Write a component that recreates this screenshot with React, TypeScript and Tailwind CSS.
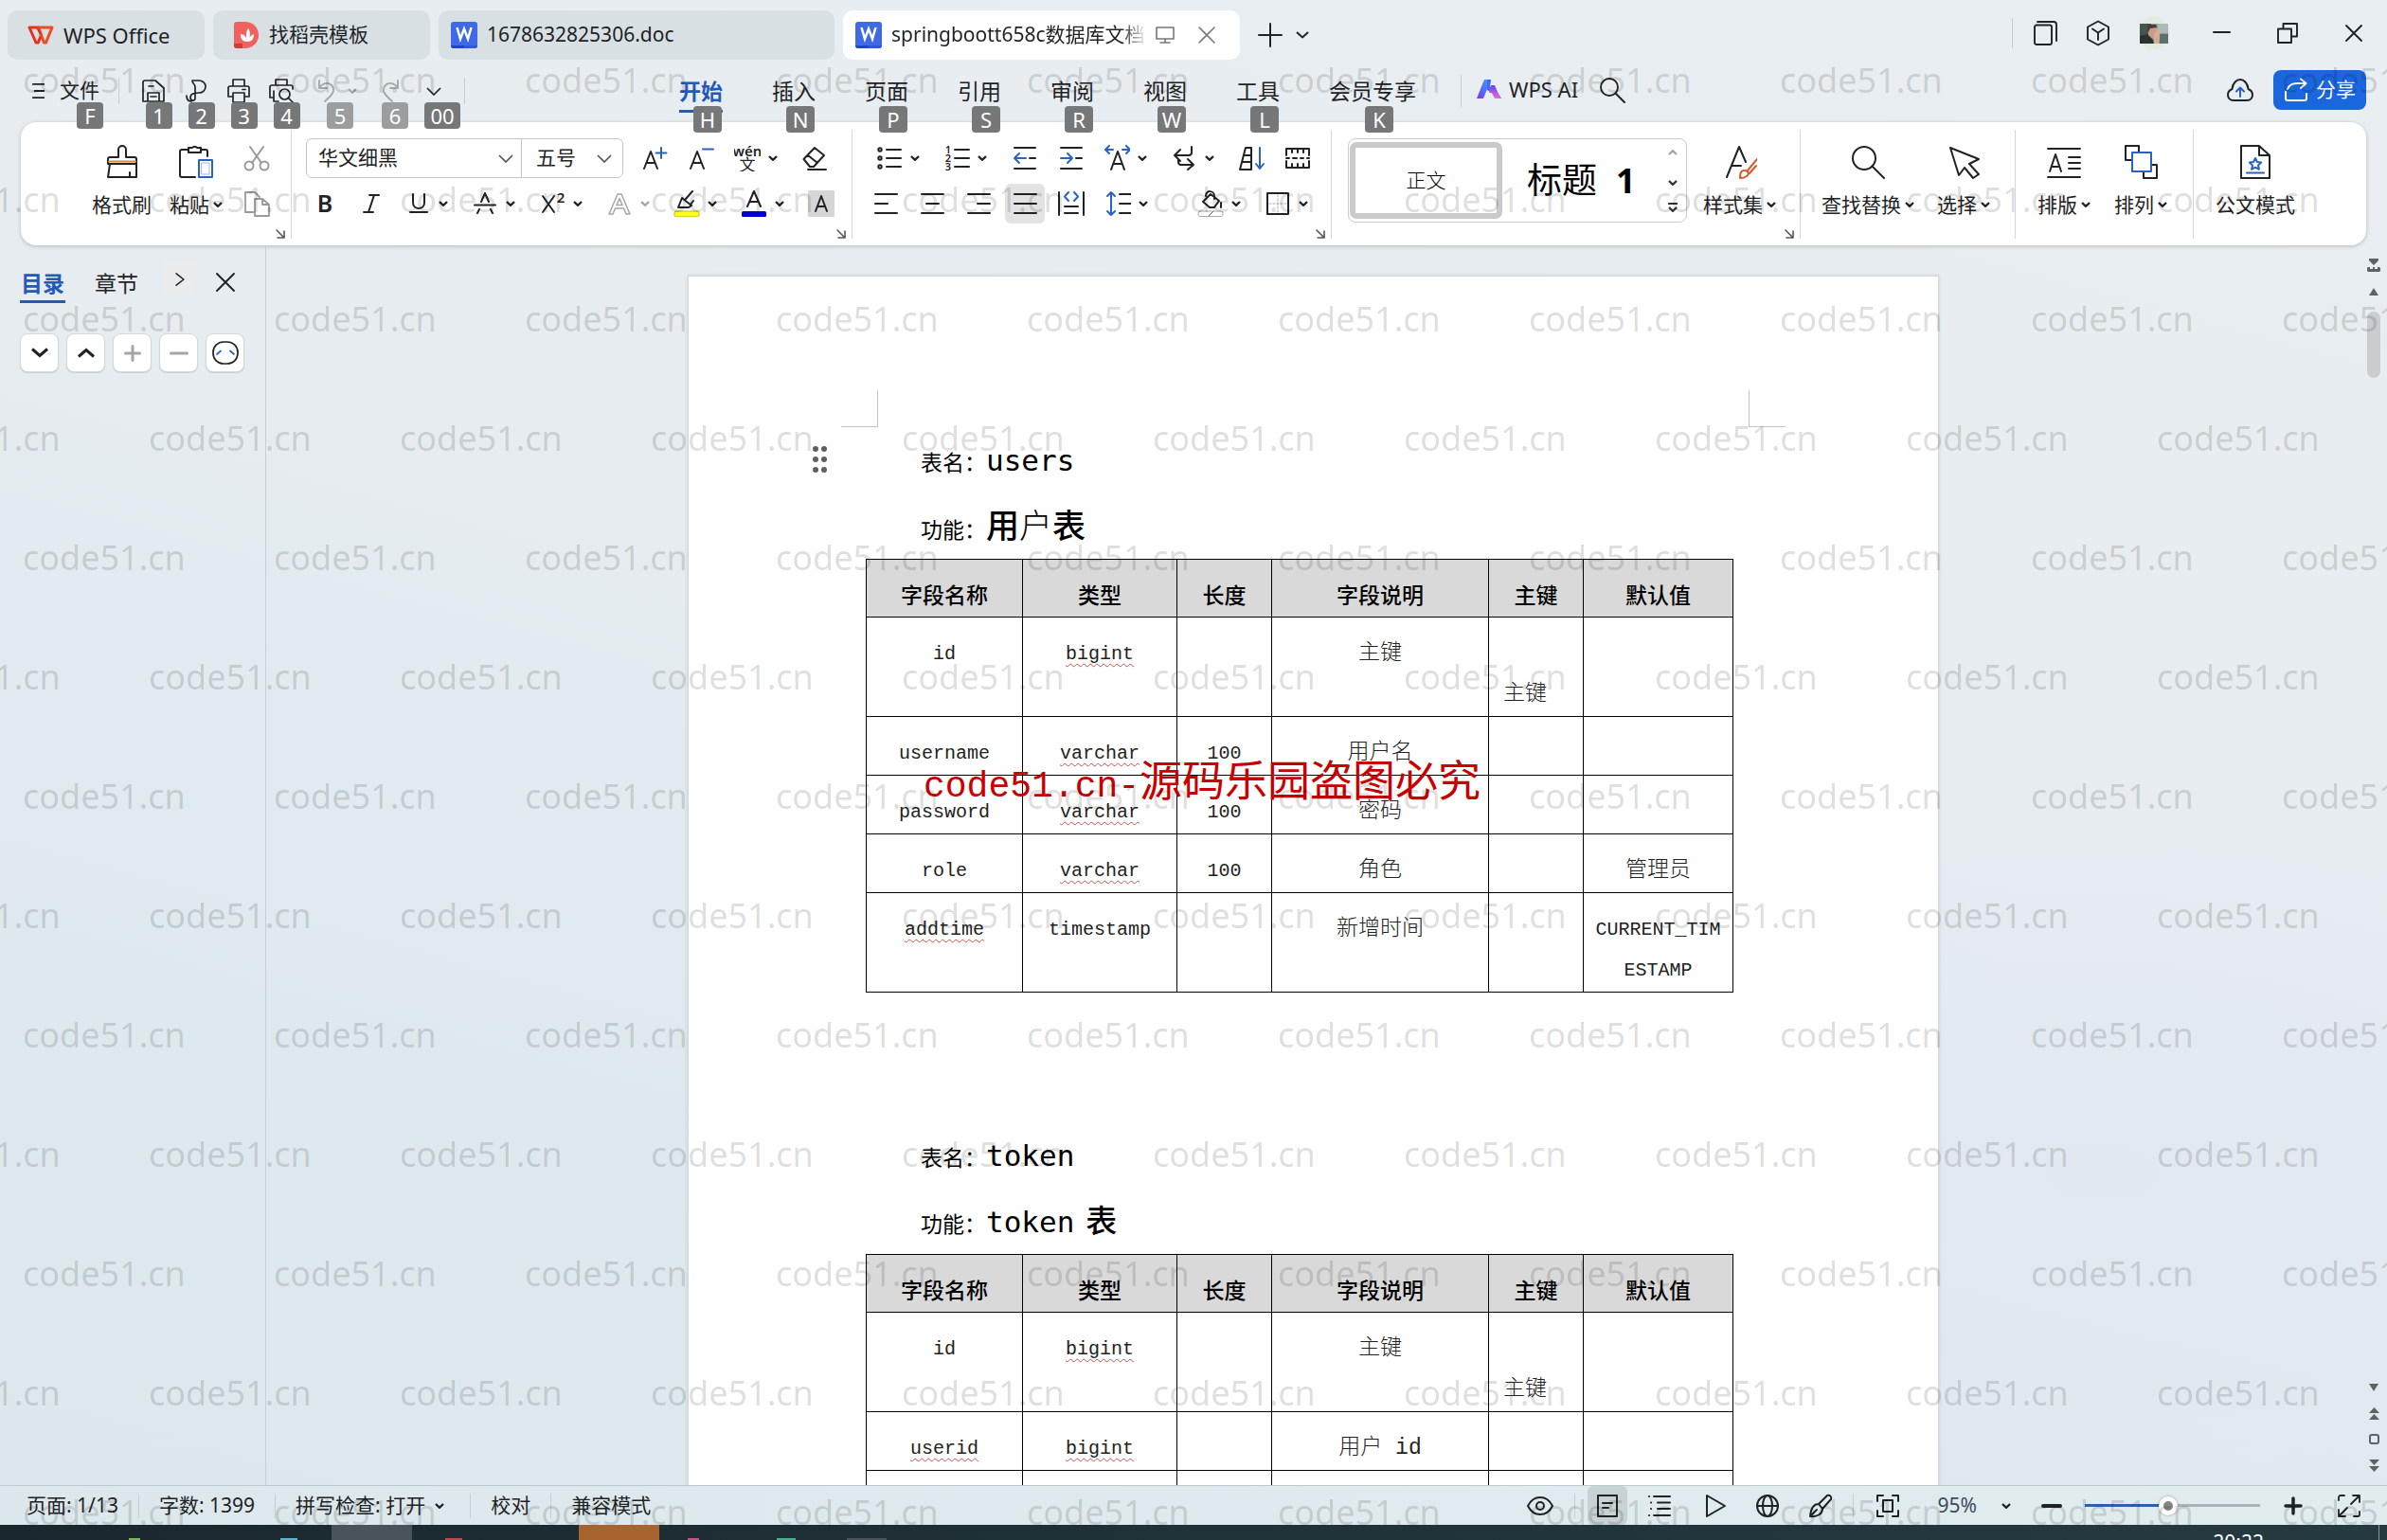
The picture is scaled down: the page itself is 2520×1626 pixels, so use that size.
import React from "react";

type Kids = { children?: React.ReactNode };

function Icon({ children, className = "size-7", box = 28, sw = 2 }: Kids & { className?: string; box?: number; sw?: number }) {
  return (
    <svg
      aria-hidden="true"
      viewBox={`0 0 ${box} ${box}`}
      className={`shrink-0 ${className}`}
      fill="none"
      stroke="currentColor"
      strokeWidth={sw}
      strokeLinecap="round"
      strokeLinejoin="round"
    >
      {children}
    </svg>
  );
}

function Caret({ className = "" }: { className?: string }) {
  return (
    <svg aria-hidden="true" viewBox="0 0 10 6" className={`h-[6px] w-[10px] shrink-0 ${className}`} fill="none" stroke="currentColor" strokeWidth="2.4">
      <path d="M1 1l4 3.8L9 1" />
    </svg>
  );
}

function Chevron({ className = "h-[9px] w-[16px]" }: { className?: string }) {
  return (
    <svg aria-hidden="true" viewBox="0 0 16 9" className={`shrink-0 ${className}`} fill="none" stroke="currentColor" strokeWidth="1.7">
      <path d="M1 1l7 7 7-7" />
    </svg>
  );
}

function Letter({ x, y, size, children, bold, fill = "currentColor" }: Kids & { x: number; y: number; size: number; bold?: boolean; fill?: string }) {
  return (
    <text x={x} y={y} fontSize={size} fontFamily='"Noto Sans","Noto Sans CJK SC",sans-serif' fontWeight={bold ? 600 : 400} textAnchor="middle" fill={fill} stroke="none">
      {children}
    </text>
  );
}

function KeyTip({ children, className }: Kids & { className: string }) {
  return (
    <span className={`absolute flex h-7 items-center justify-center rounded-[4px] text-[22px] leading-7 font-normal text-white ${className}`}>
      {children}
    </span>
  );
}

/* ---------- title bar ---------- */

function WriterLogo() {
  return (
    <svg aria-hidden="true" viewBox="0 0 28 28" className="size-7 shrink-0">
      <rect width="28" height="28" rx="3" fill="#3f69e6" />
      <path d="M0 25h14l2 3H3a3 3 0 0 1-3-3z" fill="#1f47b8" />
      <path d="M14 25h14a3 3 0 0 1-3 3H14z" fill="#2f58d2" />
      <path d="M6.500 6l3.500 12L14 7.500 18 18l3.500-12" fill="none" stroke="#fff" strokeWidth="2.500" />
    </svg>
  );
}

function WpsLogo() {
  return (
    <svg aria-hidden="true" viewBox="0 0 28 20" className="h-5 w-7 shrink-0" fill="none" stroke="#e2321f" strokeWidth="3" strokeLinejoin="round">
      <path d="M2 2h9.500l3 8-3.200 8L9 18 2 2z" />
      <path d="M11.500 2H26l-6.500 16h-2L11.500 2z" stroke="#ee4a26" />
      <path d="M14 9l-4-7" stroke="#e2321f" strokeWidth="2" />
    </svg>
  );
}

function DocerLogo() {
  return (
    <svg aria-hidden="true" viewBox="0 0 27 28" className="h-7 w-[27px] shrink-0">
      <path d="M3 0h8c9 0 15 6 15 14s-6 14-15 14H3a3 3 0 0 1-3-3V3a3 3 0 0 1 3-3z" fill="#f0625f" />
      <path d="M0 23h9v5H3a3 3 0 0 1-3-3z" fill="#d03c3c" />
      <path d="M14 21c-6 0-7-4-7-8 4 0 6 3 7 7-2-6-1-10 1-13 3 4 2 9 0 13 1-4 3-6 6-7 0 5-2 8-7 8z" fill="#fff" />
    </svg>
  );
}

function TitleBar() {
  return (
    <header className="flex h-[73px] shrink-0 items-start pt-[11px] pl-2">
      <div className="flex gap-[9px] text-[21px]">
        <button className="flex h-[52px] w-[208px] items-center gap-[10px] rounded-[10px] bg-[#d8e0e4] pl-[21px] text-[22px]">
          <WpsLogo />
          WPS Office
        </button>
        <button className="flex h-[52px] w-[229px] items-center gap-[10px] rounded-[10px] bg-[#d8e0e4] pl-[22px]">
          <DocerLogo />
          找稻壳模板
        </button>
        <button className="flex h-[52px] w-[418px] items-center gap-[10px] rounded-[10px] bg-[#d8e0e4] pl-[13px]">
          <WriterLogo />
          1678632825306.doc
        </button>
        <div className="flex h-[52px] w-[419px] items-center rounded-[10px] bg-white pl-[13px]">
          <WriterLogo />
          <button className="ml-[10px] w-[270px] overflow-hidden text-left whitespace-nowrap [mask-image:linear-gradient(to_right,#000_90%,transparent)]">
            springboott658c数据库文档
          </button>
          <button aria-label="演示" className="ml-[8px] text-[#777]">
            <Icon className="size-[22px]" box={22} sw={1.6}>
              <path d="M2 3h18v12H2zM11 15v4M6 19h10" />
            </Icon>
          </button>
          <button aria-label="关闭标签" className="ml-[23px] text-[#777]">
            <Icon className="size-[20px]" box={20} sw={1.6}>
              <path d="M2 2l16 16M18 2L2 18" />
            </Icon>
          </button>
        </div>
      </div>
      <button aria-label="新建标签" className="mt-[13px] ml-[19px]">
        <Icon className="size-[26px]" box={26} sw={2}>
          <path d="M13 1v24M1 13h24" />
        </Icon>
      </button>
      <button aria-label="标签列表" className="mt-[22px] ml-[14px] flex">
        <svg aria-hidden="true" viewBox="0 0 14 8" className="h-2 w-[14px]" fill="none" stroke="currentColor" strokeWidth="2">
          <path d="M1 1l6 5.500L13 1" />
        </svg>
      </button>
      <div className="mt-[8px] ml-auto flex h-8 items-center pr-[24px]">
        <div className="mr-[22px] h-8 w-px bg-[#c5ccd1]" />
        <button aria-label="窗口">
          <Icon className="size-7" sw={1.900}>
            <path d="M1 7.500a2 2 0 0 1 2-2h14a2 2 0 0 1 2 2V24a2 2 0 0 1-2 2H3a2 2 0 0 1-2-2zM4 2h17a3 3 0 0 1 3 3v17" />
          </Icon>
        </button>
        <button aria-label="应用" className="ml-[26px]">
          <Icon className="size-7" sw={1.900}>
            <path d="M14 1.500l11 6v13l-11 6-11-6v-13zM8 9.500l6 4 6-4M14 13.500V21" />
          </Icon>
        </button>
        <button aria-label="账户" className="ml-[29px]">
          <svg aria-hidden="true" viewBox="0 0 32 36" className="h-9 w-8">
            <ellipse cx="16" cy="18" rx="16" ry="17.500" fill="#e2ebdf" />
            <path d="M1 8h30v21H1z" fill="#8d9a96" />
            <path d="M1 8h12v10l-6 3H1z" fill="#40564f" />
            <path d="M20 8h11v10H20z" fill="#a9bcb9" />
            <path d="M10 10h8l2 6-4 8-6-3z" fill="#c79c8c" />
            <path d="M9 9h9l1 3-7 1-2 4z" fill="#4b3a38" />
            <path d="M1 21l8-2 6 6 1 4H1z" fill="#2a332f" />
            <path d="M16 19l4-6 3 3-2 13h-5z" fill="#d6ab98" />
            <path d="M22 19h9v10h-9z" fill="#5d716c" />
          </svg>
        </button>
        <button aria-label="最小化" className="ml-[46px]">
          <Icon className="size-5" box={20}>
            <path d="M1 9h17" />
          </Icon>
        </button>
        <button aria-label="还原" className="ml-[47px]">
          <Icon className="size-[24px]" box={24} sw={1.900}>
            <path d="M2 7.500h14V22H2zM7.500 7V2H22v13.500h-5.500" />
          </Icon>
        </button>
        <button aria-label="关闭" className="ml-[47px]">
          <Icon className="size-[22px]" box={22} sw={1.900}>
            <path d="M3 3l16 16M19 3L3 19" />
          </Icon>
        </button>
      </div>
    </header>
  );
}

/* ---------- menu row ---------- */

function Quick({ tip, label, children, className = "w-[45px]", tipClass = "left-1/2 -ml-2 w-7 bg-[#757779]" }: Kids & { tip: string; label: string; className?: string; tipClass?: string }) {
  return (
    <button aria-label={label} className={`relative flex h-[46px] items-center justify-center ${className}`}>
      {children}
      <KeyTip className={`top-[35px] ${tipClass}`}>{tip}</KeyTip>
    </button>
  );
}

const menus = [
  { name: "开始", tip: "H" },
  { name: "插入", tip: "N" },
  { name: "页面", tip: "P" },
  { name: "引用", tip: "S" },
  { name: "审阅", tip: "R" },
  { name: "视图", tip: "W" },
  { name: "工具", tip: "L" },
  { name: "会员专享", tip: "K" },
];

function MenuRow() {
  return (
    <div className="relative z-10 flex h-14 shrink-0 items-start pl-[33px]">
      <div className="flex h-[46px] w-[684px] shrink-0 items-center">
        <button className="relative flex h-[46px] items-center gap-[14px] text-[21px]">
          <Icon className="h-[22px] w-4" box={18}>
            <path d="M2 1h13M4 9h11M2 17h13" />
          </Icon>
          文件
          <KeyTip className="top-[35px] left-[48px] w-7 bg-[#757779]">F</KeyTip>
        </button>
        <div className="mr-[13px] ml-[20px] h-7 w-px bg-[#c9d0d4]" />
        <Quick tip="1" label="保存">
          <Icon sw={1.7}>
            <path d="M3 25V5a2 2 0 0 1 2-2h11l9 8v14H3zM8 25v-9h12v9M9 9h5M11 20h6" />
          </Icon>
        </Quick>
        <Quick tip="2" label="输出为PDF">
          <Icon sw={1.7}>
            <path d="M10 3h7c4 0 7 3 7 6.500S21 16 17 16c-5 0-9 1-9 5s5 4 5 1v-6M10 3c0 4 3 3 3 7v6M4 19c0 4 2 6 5 6" />
          </Icon>
        </Quick>
        <Quick tip="3" label="打印">
          <Icon sw={1.7}>
            <path d="M8 9V2h12v7M7 20H3V11a2 2 0 0 1 2-2h18a2 2 0 0 1 2 2v9h-4M8 16h12v10H8zM18 12.500h3" />
          </Icon>
        </Quick>
        <Quick tip="4" label="打印预览">
          <Icon sw={1.7}>
            <path d="M8 8V2h12v6M6 21H2V10a2 2 0 0 1 2-2h20a2 2 0 0 1 2 2v2M6 14v11h5" />
            <circle cx="17.500" cy="17.500" r="5.500" />
            <path d="M21.500 21.500l5 5" />
          </Icon>
        </Quick>
        <Quick tip="5" label="撤销" className="w-[70px] gap-2 text-[#a2a8ac]" tipClass="left-[26px] w-7 bg-[#9b9d9f]">
          <Icon sw={1.900}>
            <path d="M6 3v8h8M6 11c3-5 9-7 13-3 5 5 1 10-7 17" />
          </Icon>
          <Caret />
        </Quick>
        <Quick tip="6" label="恢复" className="w-[46px] text-[#a2a8ac]" tipClass="left-[14px] w-7 bg-[#9b9d9f]">
          <Icon sw={1.900}>
            <path d="M22 3v8h-8M22 11c-3-5-9-7-13-3-5 5-1 10 7 17" />
          </Icon>
        </Quick>
        <Quick tip="00" label="自定义快速访问" className="w-[46px]" tipClass="left-[13px] w-[38px] bg-[#757779]">
          <Chevron />
        </Quick>
        <div className="ml-[9px] h-7 w-px bg-[#c9d0d4]" />
      </div>
      <nav className="flex shrink-0 gap-[52px] text-[23px]">
        {menus.map((m, i) => (
          <button
            key={m.name}
            className={`relative h-[46px] border-b-[3px] leading-[46px] whitespace-nowrap ${i === 0 ? "border-[#2a5aa8] font-bold text-[#2359b8]" : "border-transparent"}`}
          >
            {m.name}
            <KeyTip className="top-[39px] left-1/2 -ml-2 w-[30px] bg-[#757779]">{m.tip}</KeyTip>
          </button>
        ))}
      </nav>
      <div className="mt-[6px] ml-[47px] h-[34px] w-px bg-[#c9d0d4]" />
      <button className="ml-4 flex h-[42px] items-center gap-[8px] text-[22px] whitespace-nowrap">
        <svg aria-hidden="true" viewBox="0 0 26 20" className="h-5 w-[26px]">
          <defs>
            <linearGradient id="aiBlue" x1="0" y1="1" x2="1" y2="0">
              <stop offset="0" stopColor="#7a35f5" />
              <stop offset="1" stopColor="#2fa8ff" />
            </linearGradient>
            <linearGradient id="aiPink" x1="0" y1="0" x2="0" y2="1">
              <stop offset="0" stopColor="#5a48f0" />
              <stop offset="1" stopColor="#f26ad0" />
            </linearGradient>
          </defs>
          <path d="M8 0h7L7 20H0z" fill="url(#aiBlue)" />
          <path d="M11 0h4l-1 8 4-1 8 13h-6l-4-6-5-3z" fill="#4b62f4" />
          <path d="M15 6h4l6 14h-6l-3-6h-3z" fill="url(#aiPink)" />
        </svg>
        WPS AI
      </button>
      <button aria-label="搜索" className="mt-[8px] ml-[22px]">
        <Icon sw={1.900}>
          <circle cx="11" cy="11" r="9" />
          <path d="M17.500 17.500L27 27" />
        </Icon>
      </button>
      <div className="mt-px ml-auto flex h-[42px] items-center pr-[22px]">
        <button aria-label="云同步" className="mr-[20px]">
          <Icon className="size-[30px]" box={30} sw={2}>
            <path d="M8 26c-4 0-6-3-6-6 0-3 2-5 4.500-6C7 8 11 4 15 4s8 4 8.500 10c2.500 1 4.500 3 4.500 6 0 3-2 6-6 6z" />
            <path d="M15 22v-9M11 16.500l4-4 4 4" stroke="#2560d0" />
          </Icon>
        </button>
        <button className="flex h-[42px] w-[98px] items-center justify-center gap-2 rounded-[8px] bg-[#1a66dc] text-[21px] text-white">
          <Icon className="size-[26px]" box={26} sw={2}>
            <path d="M2 15v7a2 2 0 0 0 2 2h18a2 2 0 0 0 2-2v-5M4 12c2-5 6-6 10-6h9M18 1.500l5.500 4.500-5.500 5" />
          </Icon>
          分享
        </button>
      </div>
    </div>
  );
}

/* ---------- ribbon ---------- */

function Tool({ label, caret, children, muted, active }: Kids & { label: string; caret?: boolean; muted?: boolean; active?: boolean }) {
  return (
    <button aria-label={label} className={`flex h-[42px] shrink-0 items-center ${caret ? "w-[71px]" : "w-[49px]"} ${muted ? "text-[#a6a6a6]" : ""}`}>
      <span className={`-mx-[7px] flex h-[42px] w-[42px] items-center justify-center rounded-[6px] ${active ? "bg-[#e3e3e3]" : ""}`}>{children}</span>
      {caret && <Caret className="ml-2" />}
    </button>
  );
}

function Big({ label, caret, children }: Kids & { label: string; caret?: boolean }) {
  return (
    <button className="flex shrink-0 flex-col items-center pt-[24px] text-[21px]">
      {children}
      <span className="mt-[13px] flex items-center gap-1 leading-7 whitespace-nowrap">
        {label}
        {caret && <Caret />}
      </span>
    </button>
  );
}

function Group({ children, className, launcher, last }: Kids & { className: string; launcher?: boolean; last?: boolean }) {
  return (
    <section className={`relative h-[130px] shrink-0 ${className}`}>
      {children}
      {launcher && (
        <button aria-label="更多设置" className="absolute right-[6px] bottom-[6px] text-[#555]">
          <Icon className="size-3" box={12} sw={1.600}>
            <path d="M2 2l8 8M10 3v7H3" />
          </Icon>
        </button>
      )}
      {!last && <div className="absolute top-2 right-0 h-[115px] w-px bg-[#d4d7d9]" />}
    </section>
  );
}

function FontGroup() {
  return (
    <Group className="w-[592px] pt-[17px] pl-[15px]" launcher>
      <div className="flex items-center">
        <div className="mr-[19px] flex h-[42px] rounded-[6px] border border-[#c3c6c8] text-[21px]">
          <label className="relative flex w-[227px] items-center border-r border-[#c3c6c8]">
            <span className="sr-only">字体</span>
            <select className="h-10 w-full appearance-none bg-transparent pl-3 outline-none">
              <option>华文细黑</option>
            </select>
            <Chevron className="pointer-events-none absolute right-[8px] h-[9px] w-[16px] text-[#555]" />
          </label>
          <label className="relative flex w-[106px] items-center">
            <span className="sr-only">字号</span>
            <select className="h-10 w-full appearance-none bg-transparent pl-[15px] outline-none">
              <option>五号</option>
            </select>
            <Chevron className="pointer-events-none absolute right-[11px] h-[9px] w-[16px] text-[#555]" />
          </label>
        </div>
        <Tool label="增大字号">
          <Icon>
            <path d="M3 25l7-18 7 18M5.500 19h9" />
            <path d="M21 3v11M15.500 8.500h11" stroke="#2a62c4" />
          </Icon>
        </Tool>
        <Tool label="减小字号">
          <Icon>
            <path d="M3 25l7-18 7 18M5.500 19h9" />
            <path d="M16 4.500h11" stroke="#2a62c4" />
          </Icon>
        </Tool>
        <Tool label="拼音指南" caret>
          <Icon>
            <Letter x={14} y={12} size={15} bold>wén</Letter>
            <Letter x={14} y={27} size={17}>文</Letter>
          </Icon>
        </Tool>
        <Tool label="清除格式">
          <Icon>
            <path d="M2.500 15L14 3l10 8-11 12H9zM7 11l10 8M7 26h19" />
          </Icon>
        </Tool>
      </div>
      <div className="mt-[6px] flex pl-[6px]">
        <Tool label="加粗">
          <Icon><Letter x={14} y={23} size={25} bold>B</Letter></Icon>
        </Tool>
        <Tool label="倾斜">
          <Icon><path d="M12 5h10M6 23h10M17 5l-6 18" /></Icon>
        </Tool>
        <Tool label="下划线" caret>
          <Icon><path d="M9 4v9c0 8 12 8 12 0V4M6 23h18" /></Icon>
        </Tool>
        <Tool label="删除线" caret>
          <Icon>
            <path d="M14 3l-4 9M14 3l4 9M3 15.500h22M8 20l-2 4M20 20l2 4" />
          </Icon>
        </Tool>
        <Tool label="上标" caret>
          <Icon>
            <path d="M4 6l12 17M16 6L4 23" />
            <Letter x={23} y={13} size={15} bold>2</Letter>
          </Icon>
        </Tool>
        <Tool label="文字效果" caret muted>
          <Icon sw={1.500}>
            <path d="M3 25L12 4h4l9 21h-4l-2.500-6h-9L7 25zM11 15.500h6L14 8.500z" />
          </Icon>
        </Tool>
        <Tool label="突出显示" caret>
          <Icon>
            <path d="M20 1l-7 8M9 8l10 8-3 2H5zM5 18l4-10M18 15l3-4" />
            <rect x="1" y="22" width="26" height="6" rx="1.500" fill="#ffff1f" stroke="#b8b816" strokeWidth="1" />
          </Icon>
        </Tool>
        <Tool label="字体颜色" caret>
          <Icon>
            <path d="M7 17l7-16 7 16M9.500 12h9" />
            <rect x="1" y="22" width="26" height="6" rx="1.500" fill="#0000cf" stroke="none" />
          </Icon>
        </Tool>
        <Tool label="字符底纹">
          <Icon>
            <rect x="0" y="0" width="28" height="28" rx="1" fill="#d6d6d6" stroke="none" />
            <path d="M8 22l6-16 6 16M10 17h8" />
          </Icon>
        </Tool>
      </div>
    </Group>
  );
}

function ParagraphGroup() {
  const blue = "#2a62c4";
  return (
    <Group className="w-[506px] pt-[17px] pl-[25px]" launcher>
      <div className="flex">
        <Tool label="项目符号" caret>
          <Icon>
            <path d="M11 5h15M11 14h15M11 23h15" />
            <circle cx="4" cy="5" r="1.700" /><circle cx="4" cy="14" r="1.700" /><circle cx="4" cy="23" r="1.700" />
          </Icon>
        </Tool>
        <Tool label="编号" caret>
          <Icon>
            <path d="M12 5h15M12 14h15M12 23h15" />
            <Letter x={5} y={9} size={11} bold>1</Letter>
            <Letter x={5} y={18} size={11} bold>2</Letter>
            <Letter x={5} y={27} size={11} bold>3</Letter>
          </Icon>
        </Tool>
        <Tool label="减少缩进">
          <Icon>
            <path d="M4 3h22M20 14h6M4 25h22" />
            <path d="M16 14H4M9 9l-5 5 5 5" stroke={blue} />
          </Icon>
        </Tool>
        <Tool label="增加缩进">
          <Icon>
            <path d="M4 3h22M20 14h6M4 25h22" />
            <path d="M4 14h12M11 9l5 5-5 5" stroke={blue} />
          </Icon>
        </Tool>
        <Tool label="字符缩放" caret>
          <Icon>
            <path d="M8 26l7-19 7 19M10.500 20h9" />
            <path d="M2 5h8M6 1L2 5l4 4M28 5h-8M24 1l4 4-4 4" stroke={blue} />
          </Icon>
        </Tool>
        <Tool label="换行" caret>
          <Icon>
            <path d="M22 2v6a3 3 0 0 1-3 3H5M10 5L4 11l6 6M8 15v3a3 3 0 0 0 3 3h13M18 15l6 6-6 5" />
          </Icon>
        </Tool>
        <Tool label="排序">
          <Icon>
            <path d="M8 3h6v23H2zM6 11h8M4 18h10" />
            <path d="M23 3v22M19 20l4 5 4-5" stroke={blue} />
          </Icon>
        </Tool>
        <Tool label="制表位">
          <Icon>
            <path d="M2 11V4h24v7M2 17v7h24v-7M8 4v4M14 4v4M20 4v4M8 24v-4M14 24v-4M20 24v-4M2 14h3M9 14h4M17 14h3M24 14h2" />
          </Icon>
        </Tool>
      </div>
      <div className="-ml-1 mt-[6px] flex items-center">
        <Tool label="左对齐"><Icon><path d="M3 4h23M3 14h13M3 24h23" /></Icon></Tool>
        <Tool label="居中"><Icon><path d="M3 4h23M8 14h13M3 24h23" /></Icon></Tool>
        <Tool label="右对齐"><Icon><path d="M3 4h23M13 14h13M3 24h23" /></Icon></Tool>
        <Tool label="两端对齐" active><Icon><path d="M3 4h23M3 14h23M3 24h23" /></Icon></Tool>
        <Tool label="分散对齐">
          <Icon>
            <path d="M1 2v24M27 2v24M7 17h14M7 24h14" />
            <path d="M11 2L7 6.500 11 11M17 2l4 4.500-4 4.500" stroke={blue} />
          </Icon>
        </Tool>
        <Tool label="行距" caret>
          <Icon>
            <path d="M16 4h12M16 14h12M16 24h12" />
            <path d="M7 2v24M3 6l4-4 4 4M3 22l4 4 4-4" stroke={blue} />
          </Icon>
        </Tool>
        <div className="mr-[24px] ml-[3px] h-8 w-px bg-[#d4d7d9]" />
        <Tool label="底纹颜色" caret>
          <Icon>
            <path d="M9 6c0-7 9-6 9 0v3M14 4L6 12l7 6h5l5-7zM25 13v5" />
            <rect x="1" y="22" width="26" height="5.500" rx="2" stroke="#aaa" strokeWidth="1" />
            <path d="M12 27l5-5" stroke="#d33" strokeWidth="1" />
          </Icon>
        </Tool>
        <Tool label="边框" caret>
          <Icon>
            <path d="M3 3h22v22H3z" />
            <path d="M14 5v18M5 14h18" stroke="#aaa" strokeWidth="1" strokeDasharray="2 2" />
          </Icon>
        </Tool>
      </div>
    </Group>
  );
}

function Ribbon() {
  const blue = "#2a62c4";
  return (
    <div className="mx-[22px] flex h-[130px] shrink-0 rounded-[16px] bg-white shadow-[0_1px_4px_rgba(0,0,0,0.22)]">
      <Group className="flex w-[286px] pl-[75px]" launcher>
        <Big label="格式刷">
          <Icon className="size-9" box={36}>
            <path d="M14 13V5a4 4 0 0 1 8 0v8h9a2 2 0 0 1 2 2v5H3v-5a2 2 0 0 1 2-2zM5 20L3 34h30V20M26 34v-5" />
            <path d="M4 17.500h28" stroke="#d98a3a" />
          </Icon>
        </Big>
        <div className="w-[19px]" />
        <Big label="粘贴" caret>
          <Icon className="size-9" box={36}>
            <path d="M10 5H3a2 2 0 0 0-2 2v25a2 2 0 0 0 2 2h14M23 5h5a2 2 0 0 1 2 2v5M10 8h13V3h-4a3 3 0 0 0-5 0h-4z" />
            <path d="M21 16h14v18H21z" stroke={blue} />
            <path d="M24 19h8v12h-8z" stroke="#9db8e6" strokeWidth="1" />
          </Icon>
        </Big>
        <div className="ml-[22px] flex flex-col gap-5 pt-[24px] text-[#9a9a9a]">
          <button aria-label="剪切">
            <Icon>
              <path d="M7 2l12 17M21 2L9 19" />
              <circle cx="6" cy="22" r="4.500" /><circle cx="22" cy="22" r="4.500" />
            </Icon>
          </button>
          <button aria-label="复制">
            <Icon sw={1.800}>
              <path d="M12 23H2V2h10l5 5M12 9h8l7 6v12H12zM20 9v6h7" />
            </Icon>
          </button>
        </div>
      </Group>
      <FontGroup />
      <ParagraphGroup />
      <Group className="flex w-[495px] pl-[17px]" launcher>
        <div className="mt-[17px] flex h-[89px] w-[358px] items-center rounded-[8px] border border-[#c9ccce] pl-px">
          <button className="h-[81px] w-[161px] shrink-0 rounded-[7px] border-[6px] border-[#cacaca] text-[21px] font-light text-black">正文</button>
          <button className="ml-[26px] flex items-baseline gap-[20px] text-[37px] leading-[50px] font-normal whitespace-nowrap text-black">
            标题<span className="text-[36px] font-bold">1</span>
          </button>
          <div className="mr-[9px] ml-auto flex h-[66px] flex-col items-center justify-between text-[#333]">
            <button aria-label="上一行" className="flex text-[#a5a5a5]"><Caret className="rotate-180" /></button>
            <button aria-label="下一行" className="mt-2 flex"><Caret /></button>
            <button aria-label="展开样式" className="flex flex-col items-center gap-[2px]">
              <span className="h-[2px] w-[10px] bg-current" />
              <Caret />
            </button>
          </div>
        </div>
        <div className="w-[17px]" />
        <Big label="样式集" caret>
          <Icon className="size-9" box={36}>
            <path d="M4 34L17 2l7 16M9 22h10" />
            <path d="M36 15L26 27M35 22l-7 8M18 35c0-6 1-8 5-8s5 4 2 6-4 2-7 2z" stroke="#d8572a" />
          </Icon>
        </Big>
      </Group>
      <Group className="flex w-[227px] pl-[22px]">
        <Big label="查找替换" caret>
          <Icon className="size-9" box={36}>
            <circle cx="14" cy="14" r="12" />
            <path d="M22.500 22.500L35 35" />
          </Icon>
        </Big>
        <div className="w-[24px]" />
        <Big label="选择" caret>
          <Icon className="size-9" box={36}>
            <path d="M4 3l30 12-10 5 10 11-6 4-9-11-6 8z" />
          </Icon>
        </Big>
      </Group>
      <Group className="flex w-[188px] pl-[23px]">
        <Big label="排版" caret>
          <Icon className="size-9" box={36}>
            <path d="M1 4h34M1 34h34M23 13h12M23 19h12M23 25h12M3 28l6-18 6 18M5 23h8" />
          </Icon>
        </Big>
        <div className="w-[25px]" />
        <Big label="排列" caret>
          <Icon className="size-9" box={36}>
            <path d="M8 16H2V1h14v6M29 21h6v14H21v-6" />
            <path d="M9 8h20v20H9z" stroke={blue} />
          </Icon>
        </Big>
      </Group>
      <Group className="flex min-w-0 flex-1 pl-[23px]" last>
        <Big label="公文模式">
          <Icon className="size-9" box={36}>
            <path d="M3 1h19l11 10v24H3zM22 1v10h11" />
            <path d="M18 14l1.900 4 4.300.5-3.200 3 .9 4.300L18 23.700l-3.900 2.100.9-4.300-3.200-3 4.300-.5zM9 29.500h18" stroke={blue} />
          </Icon>
        </Big>
      </Group>
    </div>
  );
}

/* ---------- side panel ---------- */

const navButton = "flex size-[41px] items-center justify-center rounded-[8px] border border-[#d3d8db] bg-white shadow-[0_1px_1px_rgba(0,0,0,0.12)]";

function Outline() {
  return (
    <aside className="w-[281px] shrink-0 border-r border-[#c8ced2] pl-[21px]">
      <div className="flex h-[61px] items-end text-[23px]">
        <button className="h-[42px] border-b-[3px] border-[#2a5aa8] px-px leading-[42px] font-bold text-[#2359b8]">目录</button>
        <button className="ml-[31px] h-[42px] border-b-[3px] border-transparent leading-[42px]">章节</button>
        <button aria-label="更多" className="mb-[7px] ml-[28px] flex h-[36px] w-[31px] items-center justify-center bg-[#ebecee]">
          <Icon className="h-[20px] w-[14px]" box={18}><path d="M4 1l10 8-10 8" /></Icon>
        </button>
        <button aria-label="关闭面板" className="mb-[12px] ml-[23px]">
          <Icon className="size-5" box={20} sw={1.900}><path d="M1 1l18 18M19 1L1 19" /></Icon>
        </button>
      </div>
      <div className="mt-[32px] flex gap-2">
        <button aria-label="展开" className={navButton}>
          <svg aria-hidden="true" viewBox="0 0 18 11" className="h-[11px] w-[18px]" fill="none" stroke="#222" strokeWidth="3"><path d="M1 1.500l8 7 8-7" /></svg>
        </button>
        <button aria-label="收起" className={navButton}>
          <svg aria-hidden="true" viewBox="0 0 18 11" className="h-[11px] w-[18px]" fill="none" stroke="#222" strokeWidth="3"><path d="M1 9.500l8-7 8 7" /></svg>
        </button>
        <button aria-label="添加" className={navButton}>
          <Icon className="size-[18px] text-[#a5a5a5]" box={18} sw={3}><path d="M9 1.500v15M1.500 9h15" /></Icon>
        </button>
        <button aria-label="删除" className={navButton}>
          <Icon className="size-[20px] text-[#a5a5a5]" box={20} sw={3}><path d="M1.500 10h17" /></Icon>
        </button>
        <button aria-label="智能识别" className={navButton}>
          <Icon className="size-[28px]" sw={1.700}>
            <rect x="1" y="2" width="26" height="23" rx="11" />
            <path d="M5 15l4-3.500M19 11.500l4 3.500" stroke="#2a62c4" />
          </Icon>
        </button>
      </div>
    </aside>
  );
}

/* ---------- document ---------- */

type Row = { cells: string[]; wavy: number[]; key?: boolean };

const headers = ["字段名称", "类型", "长度", "字段说明", "主键", "默认值"];

const usersRows: Row[] = [
  { cells: ["id", "bigint", "", "主键", "主键", ""], wavy: [1], key: true },
  { cells: ["username", "varchar", "100", "用户名", "", ""], wavy: [1] },
  { cells: ["password", "varchar", "100", "密码", "", ""], wavy: [1] },
  { cells: ["role", "varchar", "100", "角色", "", "管理员"], wavy: [1] },
  { cells: ["addtime", "timestamp", "", "新增时间", "", "CURRENT_TIMESTAMP"], wavy: [0] },
];

const tokenRows: Row[] = [
  { cells: ["id", "bigint", "", "主键", "主键", ""], wavy: [1], key: true },
  { cells: ["userid", "bigint", "", "用户 id", "", ""], wavy: [0, 1] },
  { cells: ["", "", "", "", "", ""], wavy: [] },
];

function isCjk(s: string) {
  return /[\u4e00-\u9fff]/.test(s);
}

function FieldTable({ rows }: { rows: Row[] }) {
  return (
    <table className="ml-[187px] w-[915px] table-fixed border-collapse text-center text-black">
      <colgroup>
        <col className="w-[165px]" />
        <col className="w-[163px]" />
        <col className="w-[100px]" />
        <col className="w-[229px]" />
        <col className="w-[100px]" />
        <col className="w-[158px]" />
      </colgroup>
      <thead>
        <tr className="bg-[#d9d9d9]">
          {headers.map((h) => (
            <th key={h} scope="col" className="h-[61px] border border-black px-0 pt-4 pb-[2px] text-[23px] leading-[42px] font-medium">
              {h}
            </th>
          ))}
        </tr>
      </thead>
      <tbody>
        {rows.map((r, i) => (
          <tr key={i} className="align-top">
            {r.cells.map((c, j) => (
              <td
                key={j}
                className={`h-[62px] border border-black pt-[17px] pb-px font-['Liberation_Mono','Noto_Sans_CJK_SC',monospace] leading-[43px] break-all text-[#222] ${isCjk(c) ? "text-[23px] font-light" : "text-[20px]"} ${r.key && j === 4 ? "pl-[15px] text-left" : "px-3"}`}
              >
                {r.key && j === 4 && <br />}
                {r.wavy.includes(j) ? (
                  <span className="underline decoration-[#c8504e] decoration-wavy decoration-1 underline-offset-[4px]">{c}</span>
                ) : (
                  c
                )}
              </td>
            ))}
          </tr>
        ))}
      </tbody>
    </table>
  );
}

const mono = "font-['DejaVu_Sans_Mono',monospace] text-[31px]";

function Document() {
  return (
    <article className="mt-8 w-[1321px] shrink-0 border border-[#d3d9dc] bg-white text-black shadow-[0_0_4px_rgba(0,0,0,0.12)]">
      <div className="flex justify-between px-[161px] pt-[120px]">
        <div className="h-[39px] w-[39px] border-r border-b border-[#c4c4c4]" />
        <div className="h-[39px] w-[39px] border-b border-l border-[#c4c4c4]" />
      </div>
      <section className="relative">
        <div className="absolute top-[20px] left-[131px] grid grid-cols-2 gap-x-[3px] gap-y-[5px]">
          {[0, 1, 2, 3, 4, 5].map((n) => (
            <span key={n} className="size-[6px] rounded-full bg-[#5f5f5f]" />
          ))}
        </div>
        <p className="h-[70px] pl-[245px] text-[23px] leading-[70px]">
          表名：<span className={mono}>users</span>
        </p>
        <p className="h-[69px] pl-[245px] text-[23px] leading-[67px]">
          功能：
          <span className="text-[35px] font-medium">
            用<span className="font-light">户</span>表
          </span>
        </p>
        <FieldTable rows={usersRows} />
        <p className="absolute top-[343px] left-[248px] leading-[60px] whitespace-nowrap text-[#c80000]">
          <span className="font-['Liberation_Mono',monospace] text-[38px]">code51.cn-</span>
          <span className="text-[45px]">源码乐园盗图必究</span>
        </p>
      </section>
      <section className="mt-[137px]">
        <p className="h-[70px] pl-[245px] text-[23px] leading-[70px]">
          表名：<span className={mono}>token</span>
        </p>
        <p className="h-[69px] pl-[245px] text-[23px] leading-[67px]">
          功能：<span className={mono}>token</span>
          <span className="ml-3 text-[33px] font-medium">表</span>
        </p>
        <FieldTable rows={tokenRows} />
      </section>
    </article>
  );
}

function ScrollRail() {
  return (
    <div className="flex w-[28px] shrink-0 flex-col items-center pb-[14px] text-[#5d6265]">
      <svg aria-hidden="true" viewBox="0 0 14 14" className="mt-[14px] h-[14px] w-[14px]" fill="currentColor">
        <path d="M2 0h10v2L7 7 2 2zM1 9h2v2h3V9h2v2h3V9h2l1 1v3l-1 1H1l-1-1v-3z" />
      </svg>
      <svg aria-hidden="true" viewBox="0 0 10 8" className="mt-[17px] h-2 w-[10px]" fill="currentColor"><path d="M5 0l5 8H0z" /></svg>
      <div className="mt-[17px] h-[70px] w-[14px] rounded-full bg-[#c9cdcf]" />
      <svg aria-hidden="true" viewBox="0 0 10 8" className="mt-auto h-2 w-[10px]" fill="currentColor"><path d="M0 0h10L5 8z" /></svg>
      <svg aria-hidden="true" viewBox="0 0 11 13" className="mt-[17px] h-[13px] w-[11px]" fill="currentColor"><path d="M5.500 0L11 6H0zM5.500 7l5.500 6H0z" /></svg>
      <span className="mt-[15px] size-[11px] rounded-[3px] border-2 border-current" />
      <svg aria-hidden="true" viewBox="0 0 11 13" className="mt-[16px] h-[13px] w-[11px]" fill="currentColor"><path d="M0 0h11L5.500 6zM0 7h11l-5.500 6z" /></svg>
    </div>
  );
}

/* ---------- status bar ---------- */

function Sep() {
  return <div className="h-[26px] w-px bg-[#c6ced2]" />;
}

function StatusBar() {
  return (
    <footer className="flex h-[42px] shrink-0 items-center justify-between border-t border-[#bccacf] bg-linear-to-r from-[#dde8ec] to-[#e1ecef] text-[21px]">
      <div className="flex items-center gap-[21px] pl-[28px]">
        <button>页面: 1/13</button>
        <Sep />
        <button>字数: 1399</button>
        <Sep />
        <button className="mr-[6px] flex items-center gap-[10px]">
          拼写检查: 打开
          <Caret />
        </button>
        <Sep />
        <button>校对</button>
        <Sep />
        <button>兼容模式</button>
      </div>
      <div className="flex h-full items-center pr-[26px]">
        <button aria-label="护眼模式">
          <Icon><path d="M1 14C4 8 9 5 14 5s10 3 13 9c-3 6-8 9-13 9S4 20 1 14z" /><circle cx="14" cy="14" r="4" /></Icon>
        </button>
        <div className="mr-[13px] ml-[22px]"><Sep /></div>
        <button aria-label="页面视图" className="flex h-[41px] w-[42px] items-center justify-center rounded-[6px] bg-[#c8d1d3]">
          <Icon><path d="M4 3h20v22H4zM9 11h10M9 16h6" /></Icon>
        </button>
        <button aria-label="大纲视图" className="ml-[20px]">
          <Icon><path d="M8 4h17M12 10.500h13M12 17h13M8 24h17M3 4h.1M5 10.500h.1M5 17h.1M3 24h.1" /></Icon>
        </button>
        <button aria-label="阅读版式" className="ml-[31px]"><Icon><path d="M5 3l19 11L5 25z" /></Icon></button>
        <button aria-label="Web版式" className="ml-[27px]">
          <Icon><circle cx="14" cy="14" r="11" /><ellipse cx="14" cy="14" rx="5" ry="11" /><path d="M3 14h22" /></Icon>
        </button>
        <button aria-label="写作模式" className="ml-[28px]">
          <Icon><path d="M12 12l9-9a3 3 0 0 1 4 4l-9 10zM12 12l4 5M12 12c-4 0-8 2-9 13 8 1 13-3 13-8M4 24l6-6" /></Icon>
        </button>
        <div className="mr-[22px] ml-[20px]"><Sep /></div>
        <button aria-label="适合页面">
          <Icon><path d="M3 9V3h6M19 3h6v6M25 19v6h-6M9 25H3v-6M9 8h10v12H9z" /></Icon>
        </button>
        <button className="ml-[39px] flex items-center gap-[26px] text-[#3c4a60]">
          95%
          <Caret className="text-[#222]" />
        </button>
        <button aria-label="缩小" className="ml-[32px]"><Icon className="size-[22px]" box={22} sw={4}><path d="M2 11h18" /></Icon></button>
        <label className="ml-[24px] flex items-center">
          <span className="sr-only">缩放比例</span>
          <input
            type="range"
            min="0"
            max="100"
            defaultValue="47"
            className="h-[3px] w-[185px] appearance-none bg-linear-to-r from-[#2a62b8] from-47% to-[#aab3b7] to-47% [&::-webkit-slider-thumb]:size-[20px] [&::-webkit-slider-thumb]:appearance-none [&::-webkit-slider-thumb]:rounded-full [&::-webkit-slider-thumb]:border-[5px] [&::-webkit-slider-thumb]:border-white [&::-webkit-slider-thumb]:bg-[#858585] [&::-webkit-slider-thumb]:shadow-[0_0_3px_rgba(0,0,0,0.35)]"
          />
        </label>
        <button aria-label="放大" className="ml-[24px]"><Icon className="size-[22px]" box={22} sw={3.500}><path d="M3 11h16M11 3v16" /></Icon></button>
        <button aria-label="全屏" className="ml-[34px]">
          <Icon sw={1.800}><path d="M3 8V5a2 2 0 0 1 2-2h4M25 20v3a2 2 0 0 1-2 2h-4M16 12l9-9M18 3h7v7M12 16l-9 9M3 18v7h7" /></Icon>
        </button>
      </div>
    </footer>
  );
}

function Taskbar() {
  return (
    <div className="flex h-4 shrink-0 items-end overflow-hidden bg-linear-to-r from-[#1a282e] to-[#263a41]">
      <span className="ml-[136px] h-[2px] w-[12px] bg-[#7cb45c]" />
      <span className="ml-[148px] h-[2px] w-[18px] bg-[#58b4cc]" />
      <span className="ml-[36px] h-4 w-[85px] bg-[#48545a]" />
      <span className="ml-[35px] h-[2px] w-[18px] bg-[#c0484c]" />
      <span className="ml-[123px] h-4 w-[85px] bg-[#a8642e]" />
      <span className="ml-[30px] h-[2px] w-[12px] bg-[#c8508a]" />
      <span className="ml-[82px] h-[2px] w-[20px] bg-[#48b08c]" />
      <span className="ml-[54px] h-[2px] w-[42px] bg-[#48545a]" />
      <time className="mt-[4px] ml-auto self-start text-[21px] leading-7 text-white">20:22</time>
      <span className="mr-2 ml-[121px] h-4 w-px bg-[#8a969b]" />
    </div>
  );
}

function Watermark() {
  return (
    <div aria-hidden="true" className="pointer-events-none absolute inset-0 z-20 overflow-hidden pt-[22px] text-[36px] leading-[126px] text-black/14 select-none">
      {Array.from({ length: 13 }, (_, r) => (
        <div key={r} className={`flex h-[126px] ${r % 2 === 0 ? "pl-6" : "-ml-[108px]"}`}>
          {Array.from({ length: 10 }, (_, c) => (
            <span key={c} className="w-[265px] shrink-0">code51.cn</span>
          ))}
        </div>
      ))}
    </div>
  );
}

export default function App() {
  return (
    <div className="relative flex h-screen flex-col overflow-hidden bg-[radial-gradient(ellipse_30%_22%_at_88%_76%,#e2e8f1_0%,transparent_100%),linear-gradient(195deg,#e9eef2_0%,#e6ecf0_45%,#dee9ee_72%,#dde8ec_100%)] font-['Noto_Sans','Noto_Sans_CJK_SC',sans-serif] text-[#1f2326]">
      <TitleBar />
      <MenuRow />
      <Ribbon />
      <main className="flex min-h-0 flex-1 overflow-hidden">
        <Outline />
        <div className="flex min-w-0 flex-1 items-start justify-center overflow-hidden">
          <Document />
        </div>
        <ScrollRail />
      </main>
      <StatusBar />
      <Taskbar />
      <Watermark />
    </div>
  );
}
